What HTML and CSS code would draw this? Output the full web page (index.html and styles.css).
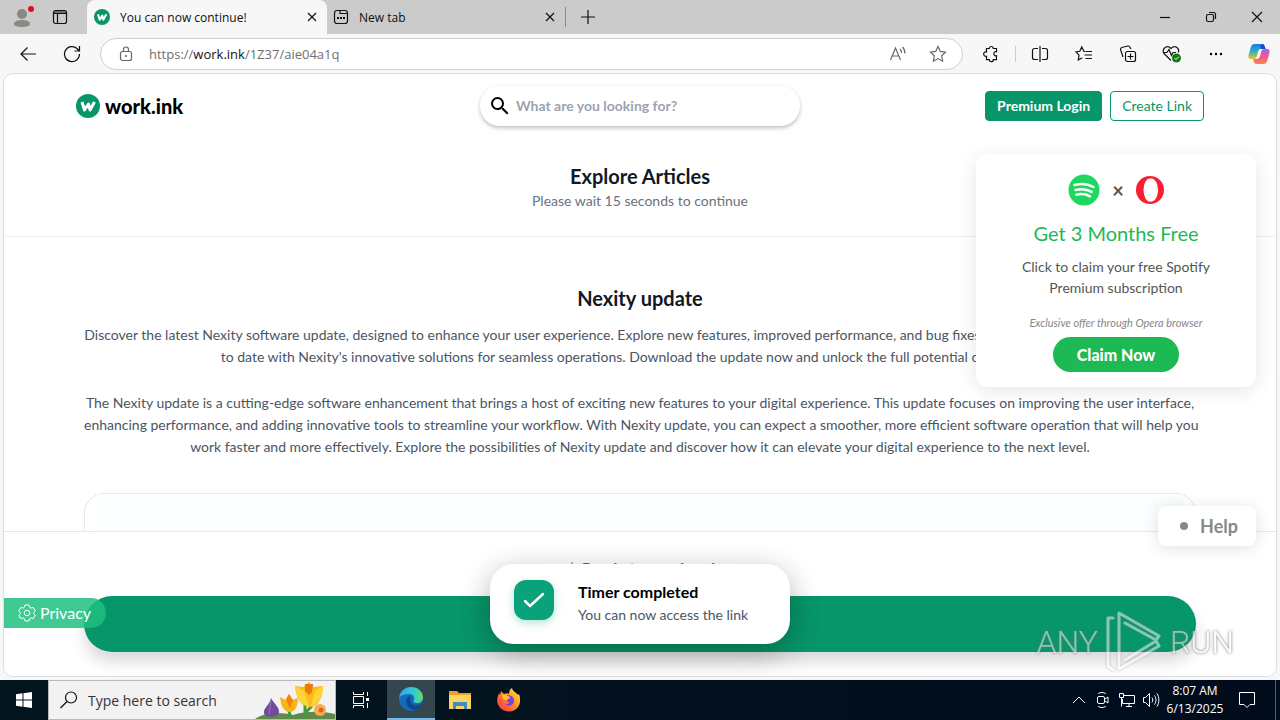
FILE: index.html
```
<!DOCTYPE html>
<html lang="en">
<head>
    <meta charset="UTF-8">
    <title>You can now continue!</title>
    <link rel="stylesheet" href="styles.css">
</head>
<body>
<header class="titlebar">
    <button class="profile" aria-label="Profile">
        <svg width="24" height="24" viewBox="0 0 24 24"><circle cx="12" cy="9" r="5" fill="#8c8883"/><path d="M4 19c0-3 4-4 8-4s8 1 8 4c0 2-4 3-8 3s-8-1-8-3z" fill="#8c8883"/><circle cx="21" cy="4" r="3" fill="#d90f22"/></svg>
    </button>
    <button class="workspaces" aria-label="Workspaces">
        <svg class="line" width="16" height="16" viewBox="0 0 16 16"><rect x="1.500" y="1.500" width="13" height="13" rx="2"/><path d="M2 3h12M2 4.500h12M5.500 5v9"/></svg>
    </button>
    <div class="tab active">
        <svg width="16" height="16" viewBox="0 0 24 24"><circle cx="12" cy="12" r="12" fill="#069669"/><path d="M6 8l2.500 8 4-6 1.500 6 4.500-8" fill="none" stroke="#fff" stroke-width="3" stroke-linejoin="round"/></svg>
        <span class="tab-title">You can now continue!</span>
        <button class="tab-close" aria-label="Close tab"><svg class="line" width="10" height="10" viewBox="0 0 10 10"><path d="M1 1l8 8M9 1l-8 8"/></svg></button>
    </div>
    <div class="tab">
        <svg class="line" width="16" height="16" viewBox="0 0 16 16"><rect x="1.500" y="1.500" width="13" height="13" rx="2.500"/><path d="M7 2v2.500h7.500"/><path d="M4 9h2M7 9h2M10 9h2" stroke-width="2"/></svg>
        <span class="tab-title">New tab</span>
        <button class="tab-close" aria-label="Close tab"><svg class="line" width="10" height="10" viewBox="0 0 10 10"><path d="M1 1l8 8M9 1l-8 8"/></svg></button>
    </div>
    <button class="tab-add" aria-label="New tab"><svg class="line" width="14" height="14" viewBox="0 0 14 14"><path d="M7 0v14M0 7h14"/></svg></button>
    <div class="window-buttons">
        <button aria-label="Minimize"><svg class="line" width="10" height="10" viewBox="0 0 10 10"><path d="M0 5.500h10"/></svg></button>
        <button aria-label="Restore"><svg class="line" width="12" height="12" viewBox="0 0 12 12"><rect x="1.500" y="3.500" width="7" height="7" rx="1.500"/><path d="M4 1.500h4.500a2 2 0 0 1 2 2V8"/></svg></button>
        <button aria-label="Close"><svg class="line" width="12" height="12" viewBox="0 0 12 12"><path d="M1 1l10 10M11 1L1 11"/></svg></button>
    </div>
</header>

<nav class="toolbar">
    <button aria-label="Back"><svg class="line" width="18" height="16" viewBox="0 0 18 16"><path d="M17 8H2M8.500 1.500L2 8l6.500 6.500"/></svg></button>
    <button aria-label="Refresh"><svg class="line" width="18" height="18" viewBox="0 0 18 18"><path d="M16.500 9a7.500 7.500 0 1 1-2.500-5.500l2 2M16.500 1v5h-5"/></svg></button>
    <div class="address">
        <svg class="line grey" width="14" height="16" viewBox="0 0 14 16"><rect x="1.500" y="5.500" width="11" height="9" rx="2"/><path d="M4.500 5V3.500a2.500 2.500 0 0 1 5 0V5"/><circle cx="7" cy="10" r=".5"/></svg>
        <a class="url" href="#">https://<b>work.ink</b>/1Z37/aie04a1q</a>
        <button aria-label="Read aloud"><svg class="line grey" width="18" height="16" viewBox="0 0 18 16"><path d="M1.500 14L6.500 2l5 12M3.200 10h6.600M11 3c1 1 1.500 2 1.500 4M13.500 1c1.500 1.500 2.500 4 2.300 6.500"/></svg></button>
        <button aria-label="Add to favorites"><svg class="line grey" width="18" height="18" viewBox="0 0 18 18"><path d="M9 1.500l2.300 4.900 5.200.7-3.800 3.700.9 5.400L9 13.600l-4.600 2.600.9-5.400L1.500 7.100l5.200-.7z"/></svg></button>
    </div>
    <button aria-label="Extensions"><svg class="line" width="18" height="18" viewBox="0 0 18 18"><path d="M4.500 3.500h2.800a2 2 0 0 1 4 0h3.200v3.200c-1.200-.6-2.700.5-2.700 2s1.500 2.600 2.700 2v4h-3.200a2 2 0 0 1-4 0H4.500v-3.500a2.200 2.200 0 1 1 0-4.200z"/></svg></button>
    <span class="separator"></span>
    <button aria-label="Split screen"><svg class="line" width="18" height="18" viewBox="0 0 18 18"><path d="M7 3.500H3.500a2 2 0 0 0-2 2v7a2 2 0 0 0 2 2H7M11 3.500h3.500a2 2 0 0 1 2 2v7a2 2 0 0 1-2 2H11M9 1v16"/></svg></button>
    <button aria-label="Favorites"><svg class="line" width="18" height="18" viewBox="0 0 18 18"><path d="M10 6.500L8.800 6.200 6.800 2 4.800 6.300 1 7l3 3.200L3.300 15l4-2.200M10.500 6.500H17M9.500 10H17M10.500 13.500H17"/></svg></button>
    <button aria-label="Collections"><svg class="line" width="18" height="18" viewBox="0 0 18 18"><rect x="6.500" y="6.500" width="10" height="10" rx="2"/><path d="M11.500 8.500v6M8.500 11.500h6M4 12L1.500 4.500a2 2 0 0 1 1.300-2l6-1.500a2 2 0 0 1 2 1L12 4"/></svg></button>
    <button aria-label="Browser essentials"><svg width="20" height="18" viewBox="0 0 20 18"><path class="stroke" d="M9 15.500L2.500 9a4 4 0 0 1 0-6 4 4 0 0 1 6 0l.5.500.5-.5a4 4 0 0 1 6 0c1.500 1.500 1.500 3 .8 4.500M1 7.500h4l2-3 2.500 6 1.500-3h3"/><circle cx="14.500" cy="13" r="4.500" fill="#107c10"/><path d="M12.500 13l1.500 1.500 2.800-2.800" fill="none" stroke="#fff"/></svg></button>
    <button aria-label="Settings and more"><svg width="14" height="4" viewBox="0 0 14 4"><circle cx="2" cy="2" r="1.200"/><circle cx="7" cy="2" r="1.200"/><circle cx="12" cy="2" r="1.200"/></svg></button>
    <button class="copilot" aria-label="Copilot">
        <svg width="22" height="22" viewBox="0 0 22 22">
            <defs>
                <linearGradient id="cop-a" x1="0" y1="0" x2="0" y2="1"><stop offset="0" stop-color="#1a7bea"/><stop offset=".5" stop-color="#2db3c0"/><stop offset="1" stop-color="#f3c515"/></linearGradient>
                <linearGradient id="cop-b" x1="0" y1="0" x2="0" y2="1"><stop offset="0" stop-color="#a960ee"/><stop offset=".5" stop-color="#f0588f"/><stop offset="1" stop-color="#fb8448"/></linearGradient>
            </defs>
            <path d="M7 1h7c2 0 2.500 1.500 3 3.500l.5 1.500H13c-2 0-2.500 1.200-3 3l-1 4c-.6 2-1.500 3-3.500 3H3c-2.500 0-3-2-2.300-4.500l2-7C3.500 2 4.500 1 7 1z" fill="url(#cop-a)"/>
            <path d="M15 21H9c-2.500 0-3-1.500-3.500-3.500L5 16h3.500c2 0 3-1 3.600-3l1-4c.5-2 1.400-3 3.400-3H19c2.500 0 3 2 2.300 4.500l-2 7C18.500 20 17.500 21 15 21z" fill="url(#cop-b)"/>
            <path d="M14 1c2 0 2.500 1.500 3 3.500l.5 1.500H13l-1-3z" fill="#1751c8"/>
        </svg>
    </button>
</nav>

<main class="page">
    <header class="site-header">
        <a class="logo" href="#">
            <svg width="24" height="24" viewBox="0 0 24 24"><circle cx="12" cy="12" r="12" fill="#069669"/><path d="M6 8l2.500 8 4-6 1.500 6 4.500-8" fill="none" stroke="#fff" stroke-width="3" stroke-linejoin="round"/></svg>
            work.ink
        </a>
        <label class="search">
            <svg width="24" height="24" viewBox="0 0 24 24"><path d="M15.500 14h-.79l-.28-.27A6.471 6.471 0 0 0 16 9.500 6.500 6.500 0 1 0 9.500 16c1.610 0 3.090-.59 4.230-1.570l.27.28v.79l5 4.990L20.490 19l-4.990-5zm-6 0C7.010 14 5 11.990 5 9.500S7.010 5 9.500 5 14 7.010 14 9.500 11.990 14 9.500 14z"/></svg>
            <input type="text" placeholder="What are you looking for?" aria-label="Search">
        </label>
        <div class="site-actions">
            <a class="btn btn-solid" href="#">Premium Login</a>
            <a class="btn btn-outline" href="#">Create Link</a>
        </div>
    </header>

    <div class="scroll">
        <section class="intro">
            <h1>Explore Articles</h1>
            <p>Please wait 15 seconds to continue</p>
        </section>
        <article class="article">
            <h2>Nexity update</h2>
            <p>Discover the latest Nexity software update, designed to enhance your user experience. Explore new features, improved performance, and bug fixes to boost your productivity. Stay up<br>to date with Nexity's innovative solutions for seamless operations. Download the update now and unlock the full potential of this update.</p>
            <p>The Nexity update is a cutting-edge software enhancement that brings a host of exciting new features to your digital experience. This update focuses on improving the user interface,<br>enhancing performance, and adding innovative tools to streamline your workflow. With Nexity update, you can expect a smoother, more efficient software operation that will help you<br>work faster and more effectively. Explore the possibilities of Nexity update and discover how it can elevate your digital experience to the next level.</p>
            <div class="card"><div class="card-body"></div></div>
        </article>
    </div>

    <footer class="continue-bar">
        <p>✦ Ready to continue!</p>
        <button class="continue-btn" aria-label="Continue"></button>
    </footer>

    <aside class="promo">
        <div class="promo-logos">
            <svg width="32" height="32" viewBox="0 0 32 32"><circle cx="16" cy="16" r="15.500" fill="#1ed760"/><path d="M6.500 11c6.500-1.700 13.500-1 19 2M7.500 16c5.500-1.500 11.500-.8 16.200 1.900M8.500 20.800c4.500-1.200 9.500-.7 13.500 1.600" fill="none" stroke="#fff" stroke-width="2.500" stroke-linecap="round"/></svg>
            <span>×</span>
            <svg width="28" height="28" viewBox="0 0 28 28"><circle cx="14" cy="14" r="14" fill="#fa1e32"/><ellipse cx="14" cy="14" rx="6.500" ry="11.500" fill="#fff"/><path d="M14 2.500c5-1 8 5 8 11.500s-3 12.500-8 11.500c4-1 5.500-6 5.500-11.500S18 3.500 14 2.500z" fill="#fff"/></svg>
        </div>
        <h3>Get 3 Months Free</h3>
        <p>Click to claim your free Spotify<br>Premium subscription</p>
        <small>Exclusive offer through Opera browser</small>
        <button class="claim">Claim Now</button>
    </aside>

    <button class="help"><span class="dot"></span>Help</button>

    <button class="privacy">
        <svg width="18" height="18" viewBox="0 0 18 18" fill="none" stroke="#fff"><path d="M7 1h4l.6 2.300 1.400.8 2.300-.6 2 3.400L15.600 8.500v1l1.700 1.600-2 3.400-2.300-.6-1.400.8L11 17H7l-.6-2.300-1.400-.8-2.300.6-2-3.400L2.400 9.500v-1L.7 6.900l2-3.400 2.300.6 1.400-.8z" stroke-linejoin="round"/><circle cx="9" cy="9" r="2.800"/></svg>
        Privacy
    </button>

    <div class="toast" role="status">
        <span class="toast-icon"><svg width="24" height="24" viewBox="0 0 24 24"><path d="M3 13l5 5L21 6" fill="none" stroke="#fff" stroke-width="2.500" stroke-linecap="round" stroke-linejoin="round"/></svg></span>
        <div>
            <strong>Timer completed</strong>
            <p>You can now access the link</p>
        </div>
    </div>
</main>

<div class="watermark">
    <span>ANY</span>
    <svg width="56" height="64" viewBox="0 0 56 64" fill="none" stroke="#fff" stroke-width="3" stroke-linejoin="round" stroke-linecap="round"><path d="M7 8H2v48l5 4M13 45V3l40 23-3 4-31-17M13 45v14l40-23-3-5L19 50"/></svg>
    <span>RUN</span>
</div>

<footer class="taskbar">
    <button class="start" aria-label="Start"><svg width="16" height="16" viewBox="0 0 16 16" fill="#fff"><path d="M0 2.300L6.500 1.300V7.500H0zM7.500 1.200L16 0v7.500H7.500zM0 8.500h6.500v6.200L0 13.700zM7.500 8.500H16V16l-8.500-1.200z"/></svg></button>
    <label class="task-search">
        <svg class="line" width="18" height="18" viewBox="0 0 18 18"><circle cx="11" cy="6.500" r="5.500"/><path d="M7 10.500L.5 17"/></svg>
        <input type="text" placeholder="Type here to search" aria-label="Search Windows">
        <svg width="80" height="38" viewBox="0 0 80 38">
            <path d="M0 38c10-7 25-7 38-4 12-4 28-4 42-1v5z" fill="#5f8a4c"/>
            <path d="M36 38l-3-12M50 37V24M50 32l7-7" fill="none" stroke="#3f9a3b" stroke-width="3"/>
            <path d="M16 17c2 5 9 9 8 15-2 5-14 5-15 0-1-5 6-8 7-15z" fill="#714c9c"/><path d="M16 20l-2 13" stroke="#9c78bd"/>
            <path d="M25 16l6 3 3-6 3 6 6-2c0 8-3 14-8 14-6 0-9-6-10-15z" fill="#f9b416"/>
            <path d="M31 18l3-5 4 6-3 9z" fill="#f28313"/>
            <path d="M40 5l8 1 6-5 5 5 9-1c0 12-5 21-13 21-9 0-14-9-15-21z" fill="#fbbd16"/>
            <path d="M40 5l9 5 5 15c-9-1-13-10-14-20zM68 5l-8 5-4 15c8-2 12-10 12-20z" fill="#ffd439"/>
            <path d="M50 3h8l-1 8-3 3-4-4z" fill="#ea7814"/>
            <circle cx="65" cy="29" r="6" fill="#f7ac4d"/><circle cx="66" cy="29" r="2.500" fill="#d96b1a"/>
        </svg>
    </label>
    <button class="task" aria-label="Task view"><svg width="18" height="18" viewBox="0 0 18 18" fill="none" stroke="#fff"><path d="M1.500 1v2.500h10V1M1.500 17v-2.500h10V17M1.500 5.500h10v7h-10zM15.500 1v4M15.500 12v5"/><path d="M14 8.500h3" stroke-width="3"/></svg></button>
    <button class="task current" aria-label="Microsoft Edge">
        <svg width="26" height="26" viewBox="0 0 26 26">
            <defs><linearGradient id="edge" x1="0" y1="0" x2="1" y2="0"><stop offset="0" stop-color="#2ea6ea"/><stop offset=".6" stop-color="#31c9d3"/><stop offset="1" stop-color="#63dc60"/></linearGradient></defs>
            <circle cx="13" cy="13" r="12" fill="#1669bd"/>
            <path d="M1 12C2 5 7 1 13 1c7 0 12 5 12 10 0 4-3 6-6 6-2.500 0-4-1-3.500-2 2-3 0-7-4-7C7 8 3 9 1 12z" fill="url(#edge)"/>
            <path d="M9 12c-3 6 2 12 8 12 3 0 5-2 7-5-4 2-9 1-11-2-1-2-1-4 0-6-2-1-3 0-4 1z" fill="#114a8c"/>
            <path d="M14 12c-2 3 0 7 4 7 3 0 5-1 6.500-2L24 20l-4 0c-5 0-8-4-6-8z" fill="#34464e"/>
        </svg>
    </button>
    <button class="task" aria-label="File Explorer"><svg width="22" height="20" viewBox="0 0 22 20"><path d="M0 1h8l2 2h12v5H0z" fill="#e8a327"/><path d="M0 5h22v14H0z" fill="#fcd462"/><path d="M4 19v-7h14v7h-3v-3H7v3z" fill="#3a8fc9"/></svg></button>
    <button class="task" aria-label="Firefox">
        <svg width="24" height="24" viewBox="0 0 24 24">
            <defs><linearGradient id="fox" x1="1" y1="0" x2="0" y2="1"><stop offset="0" stop-color="#fff44f"/><stop offset=".45" stop-color="#ff9220"/><stop offset="1" stop-color="#f7245d"/></linearGradient></defs>
            <path d="M3 7l1-4 3 3c2-1 4-1 5 0 0-3 1-5 3-6 0 3 5 5 6 7l1-1c3 8 0 17-10 17.500C3 23.500-2 15 1 8l1-3z" fill="url(#fox)"/>
            <path d="M8 8c5-2 10 1 9 6-1 4-7 5-9 2 3 1 4-1 4-2-3 0-4-2-5-4z" fill="#7543e5"/>
            <path d="M5 7c2-1 4 0 6 1l2 1c0 2-3 2-3 4l-4-2z" fill="#ffbd2f"/>
        </svg>
    </button>
    <div class="tray">
        <button aria-label="Show hidden icons"><svg width="14" height="8" viewBox="0 0 14 8" fill="none" stroke="#fff"><path d="M1 7l6-6 6 6"/></svg></button>
        <button aria-label="Meet now"><svg width="14" height="18" viewBox="0 0 14 18" fill="none" stroke="#fff"><rect x="1.500" y="5.500" width="7" height="7" rx="1.500"/><path d="M9 8l3-2v6l-3-2M2 3c2-2 6-2 8 0M2 15c2 2 6 2 8 0"/></svg></button>
        <button aria-label="Network"><svg width="18" height="16" viewBox="0 0 18 16" fill="none" stroke="#fff"><path d="M6 3.500h10.500v8H4.500V7M8 14.500h6M11 12v2M1.500 1.500h4v4h-4zM3.500 6v8.500"/></svg></button>
        <button aria-label="Volume"><svg width="18" height="16" viewBox="0 0 18 16" fill="none" stroke="#fff"><path d="M1.500 5.500h2l4-4v13l-4-4h-2zM10 5.500c1 1.500 1 3.500 0 5M12.500 3.500c2 3 2 6 0 9M15 1.500c2.500 4 2.500 9 0 13"/></svg></button>
        <time class="clock">8:07 AM<br>6/13/2025</time>
        <button class="notify" aria-label="Notifications"><svg width="18" height="18" viewBox="0 0 18 18" fill="none" stroke="#fff"><path d="M1.500 1.500h15v12H12L9 16.500l-3-3H1.500z"/></svg></button>
        <span class="show-desktop"></span>
    </div>
</footer>
</body>
</html>
```
FILE: styles.css
```
*{
    box-sizing: border-box;
    margin: 0;
    padding: 0;
}
body{
    height: 100vh;
    display: flex;
    flex-direction: column;
    overflow: hidden;
    position: relative;
    background-color: #f7f7f7;
    font-family: "Open Sans", "Noto Sans", sans-serif;
    font-size: 12px;
    color: #111;
}
button{
    border: 0;
    background: none;
    font: inherit;
    color: inherit;
    display: flex;
    align-items: center;
    justify-content: center;
}
input{
    border: 0;
    outline: 0;
    background: none;
    font: inherit;
    min-width: 0;
}
a{
    color: inherit;
    text-decoration: none;
}
svg{
    flex: none;
}
.line, .stroke{
    fill: none;
    stroke: #111;
    stroke-width: 1.2;
}
.grey{
    stroke: #666;
}

/* tab strip */
.titlebar{
    height: 34px;
    flex: none;
    display: flex;
    background-color: #cbcbcb;
}
.profile{
    width: 44px;
}
.workspaces{
    width: 32px;
    margin-right: 11px;
}
.tab{
    width: 239px;
    display: flex;
    align-items: center;
    gap: 10px;
    padding: 0 9px 0 6px;
    border-right: 1px solid #888;
    border-image: linear-gradient(transparent 8px, #888 8px, #888 26px, transparent 26px) 1;
}
.active{
    width: 240px;
    padding-left: 7px;
    border: 0;
    border-radius: 8px 8px 0 0;
    background-color: #f7f7f7;
}
.tab-title{
    flex: 1;
}
.tab-close{
    width: 12px;
    height: 20px;
}
.tab-add{
    width: 44px;
}
.window-buttons{
    margin-left: auto;
    display: flex;
}
.window-buttons button{
    width: 46px;
}

/* toolbar */
.toolbar{
    height: 39px;
    flex: none;
    display: flex;
    align-items: center;
    padding-left: 6px;
}
.toolbar button{
    width: 44px;
    height: 32px;
    flex: none;
}
.toolbar .copilot{
    width: 42px;
}
.address{
    flex: 1;
    height: 32px;
    display: flex;
    align-items: center;
    margin: 0 6px;
    padding-left: 18px;
    border: 1px solid #d0d0d0;
    border-radius: 16px;
    background-color: #fff;
}
.toolbar .address button{
    width: 32px;
    margin-right: 8px;
}
.url{
    flex: 1;
    margin-left: 16px;
    font-size: 13px;
    color: #707070;
}
.url b{
    font-weight: 400;
    color: #111;
}
.separator{
    width: 1px;
    height: 16px;
    margin: 0 2px;
    background-color: #ccc;
}

/* page */
.page{
    flex: 1;
    min-height: 0;
    display: flex;
    flex-direction: column;
    position: relative;
    overflow: hidden;
    margin: 0 3px 3px;
    border: 1px solid #ddd;
    border-radius: 10px;
    background-color: #fff;
    font-family: Lato, Roboto, sans-serif;
    font-size: 14px;
    line-height: 22px;
    color: #4b5563;
}
.site-header{
    height: 64px;
    flex: none;
    display: grid;
    grid-template-columns: 1fr 320px 1fr;
    align-items: center;
    padding: 0 72px;
}
.logo{
    display: flex;
    align-items: center;
    gap: 5px;
    font-size: 20px;
    font-weight: 900;
    color: #000;
}
.search{
    height: 40px;
    display: flex;
    align-items: center;
    gap: 4px;
    padding: 0 8px;
    border-radius: 20px;
    box-shadow: 0 2px 4px rgba(0,0,0,.25);
}
.search input{
    flex: 1;
    font-weight: 700;
}
.search input::placeholder{
    color: #9ca3af;
}
.site-actions{
    display: flex;
    justify-content: flex-end;
    gap: 8px;
}
.btn{
    height: 30px;
    padding: 0 11px;
    border: 1px solid #069669;
    border-radius: 4px;
    line-height: 28px;
    color: #069669;
}
.btn-solid{
    background-color: #069669;
    color: #fff;
    font-weight: 700;
}
.scroll{
    flex: 1;
    min-height: 0;
    overflow: hidden;
    text-align: center;
    white-space: nowrap;
}
.intro{
    padding: 24px 0;
    border-bottom: 1px solid #f0f0f2;
    color: #6b7280;
}
h1, h2{
    font-size: 20px;
    line-height: 28px;
    font-weight: 700;
    color: #111827;
}
.article{
    padding: 47px 80px 0;
}
.article h2{
    margin-bottom: 12px;
}
.article p{
    margin-bottom: 24px;
}
.card{
    height: 200px;
    margin-top: 35px;
    padding: 0 12px;
    border: 1px solid #e5e7eb;
    border-radius: 20px;
}
.card-body{
    height: 100%;
    background-color: #fafefe;
}
.continue-bar{
    flex: none;
    padding: 24px 80px;
    border-top: 1px solid #e5e7eb;
    background-color: #fff;
    text-align: center;
}
.continue-bar p{
    margin-bottom: 16px;
    font-size: 16px;
    line-height: 24px;
    font-weight: 700;
    color: #069669;
}
.continue-btn{
    width: 100%;
    height: 56px;
    border-radius: 28px;
    background-color: #069669;
    box-shadow: 0 10px 15px rgba(0,0,0,.15);
}

/* floating parts */
.promo{
    position: absolute;
    top: 80px;
    right: 20px;
    width: 280px;
    padding: 20px 20px 15px;
    display: flex;
    flex-direction: column;
    align-items: center;
    border-radius: 12px;
    background-color: #fff;
    box-shadow: 0 4px 20px rgba(0,0,0,.1);
    text-align: center;
    line-height: 21px;
    color: #555;
}
.promo-logos{
    display: flex;
    align-items: center;
    gap: 12px;
    margin-bottom: 12px;
}
.promo-logos span{
    font-size: 20px;
    font-weight: 700;
}
.promo h3{
    margin-bottom: 8px;
    font-size: 20px;
    line-height: 30px;
    font-weight: 400;
    color: #1db954;
}
.promo small{
    margin-top: 16px;
    font-size: 11px;
    line-height: 18px;
    font-style: italic;
    color: #888;
}
.claim{
    height: 35px;
    margin-top: 5px;
    padding: 0 24px;
    border-radius: 18px;
    background-color: #1db954;
    font-size: 16px;
    font-weight: 900;
    color: #fff;
}
.help{
    position: absolute;
    right: 20px;
    bottom: 130px;
    height: 40px;
    gap: 12px;
    padding: 0 18px 0 22px;
    border-radius: 8px;
    background-color: #fff;
    box-shadow: 0 2px 16px rgba(0,0,0,.12);
    font-size: 18px;
    font-weight: 700;
    color: #888;
}
.dot{
    width: 8px;
    height: 8px;
    border-radius: 50%;
    background-color: #888;
}
.privacy{
    position: absolute;
    left: 0;
    bottom: 48px;
    height: 30px;
    gap: 4px;
    padding: 0 15px 0 14px;
    border-radius: 0 15px 15px 0;
    background-color: rgba(31,192,128,.85);
    font-size: 16px;
    color: #fff;
}
.toast{
    position: absolute;
    left: 50%;
    bottom: 32px;
    width: 300px;
    height: 80px;
    transform: translateX(-50%);
    display: flex;
    gap: 24px;
    padding: 16px 24px;
    border-radius: 24px;
    background-color: #fff;
    box-shadow: 0 8px 30px rgba(0,0,0,.3);
    white-space: nowrap;
}
.toast-icon{
    width: 40px;
    height: 40px;
    display: flex;
    align-items: center;
    justify-content: center;
    border-radius: 12px;
    background-color: #0aa27b;
    box-shadow: 0 3px 8px rgba(10,162,123,.3);
}
.toast strong{
    display: block;
    font-size: 16px;
    line-height: 24px;
    color: #000;
}
.watermark{
    position: absolute;
    right: 46px;
    bottom: 46px;
    display: flex;
    align-items: center;
    gap: 8px;
    opacity: .5;
    font-family: Roboto, sans-serif;
    font-size: 32px;
    font-weight: 300;
    color: #fff;
    text-shadow: 0 0 3px #666;
    filter: drop-shadow(0 0 1px #777);
}

/* taskbar */
.taskbar{
    height: 40px;
    flex: none;
    display: flex;
    background: linear-gradient(90deg, #02161d, #02101e 60%, #000c1c);
    color: #fff;
}
.start{
    width: 48px;
}
.task-search{
    width: 288px;
    display: flex;
    align-items: center;
    padding-left: 11px;
    border: 1px solid #b8b8b8;
    background-color: #f2f2f2;
}
.task-search input{
    flex: 1;
    padding-left: 10px;
    font-size: 14px;
}
.task-search input::placeholder{
    color: #333;
}
.task{
    width: 49px;
}
.current{
    width: 48px;
    margin-left: 2px;
    background-color: #34464e;
    border-bottom: 2px solid #76b9ed;
}
.tray{
    margin-left: auto;
    display: flex;
}
.tray button{
    width: 24px;
}
.clock{
    width: 64px;
    padding-top: 2px;
    text-align: center;
    line-height: 18px;
}
.tray .notify{
    width: 40px;
}
.show-desktop{
    width: 5px;
    margin-left: 8px;
    border-left: 1px solid #555f69;
}
```
